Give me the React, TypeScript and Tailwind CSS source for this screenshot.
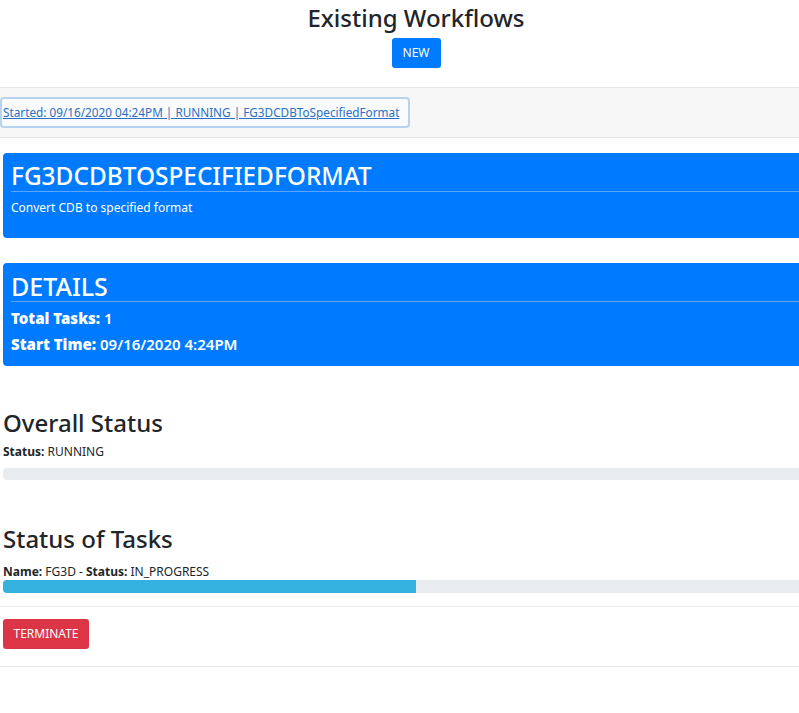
export default function App() {
   return (
      <div className="w-[799px] h-[713px] overflow-hidden bg-white text-[#212529]" style={{ fontFamily: '"Noto Sans", "Open Sans", sans-serif' }}>
         <div className="flex w-[832px] flex-col items-center pt-[2px]">
            <h2 className="text-[24px] leading-[32px] font-medium">Existing Workflows</h2>
            <button className="mt-[4px] h-[30px] w-[49px] rounded-[3px] bg-[#007bff] text-[12px] text-white">NEW</button>
         </div>

         <div className="mt-[19px] h-[51px] border-y border-[#e6e6e6] bg-[#f7f7f7] pt-[9px]">
            <div className="flex h-[31px] w-[410px] items-center rounded-[4px] border-2 border-[#b7d3f0] bg-[#f9fafb] pl-[1px]">
               <a href="#" className="text-[11.75px] text-[#2b70c2] underline">
                  Started: 09/16/2020 04:24PM | RUNNING | FG3DCDBToSpecifiedFormat
               </a>
            </div>
         </div>

         <div className="pl-[3px]">
            <div className="mt-[15px] h-[85px] rounded-l-[4px] bg-[#007bff] pl-[8px] pt-[9px] text-white">
               <h3 className="text-[24.4px] leading-[28px] font-medium">FG3DCDBTOSPECIFIEDFORMAT</h3>
               <div className="mt-[1px] border-t border-[#5aa6ff]" />
               <p className="mt-[8px] text-[12px] leading-[16px]">Convert CDB to specified format</p>
            </div>

            <div className="mt-[25px] h-[103px] rounded-l-[4px] bg-[#007bff] pl-[8px] pt-[9px] text-white">
               <h3 className="text-[25px] leading-[28px] font-medium">DETAILS</h3>
               <div className="mt-[1px] border-t border-[#5aa6ff]" />
               <p className="mt-[6px] text-[15px] leading-[20px] font-semibold">
                  <b>Total Tasks:</b> 1
               </p>
               <p className="mt-[6px] text-[15px] leading-[20px] font-semibold">
                  <b>Start Time:</b> 09/16/2020 4:24PM
               </p>
            </div>

            <h3 className="mt-[42px] text-[24px] leading-[30px] font-medium">Overall Status</h3>
            <p className="mt-[6px] text-[12px] leading-[16px]">
               <b>Status:</b> RUNNING
            </p>
            <div className="mt-[8px] h-[12px] rounded-l-[4px] bg-[#e9ecef]" />

            <h3 className="mt-[44px] text-[24px] leading-[30px] font-medium">Status of Tasks</h3>
            <p className="mt-[10px] text-[12px] leading-[16px]">
               <b>Name:</b> FG3D - <b>Status:</b> IN_PROGRESS
            </p>
            <div className="flex h-[13px] overflow-hidden rounded-l-[4px] bg-[#e9ecef]">
               <div className="h-full bg-[#35b1e0]" style={{ width: 413 }} />
            </div>
         </div>

         <div className="mt-[13px] border-t border-[#ebebeb]" />
         <div className="pl-[3px] pt-[12px]">
            <button className="h-[30px] w-[86px] rounded-[3px] bg-[#dc3545] text-[12px] text-white">TERMINATE</button>
         </div>
         <div className="mt-[17px] border-t border-[#ebebeb]" />
      </div>
   );
}
